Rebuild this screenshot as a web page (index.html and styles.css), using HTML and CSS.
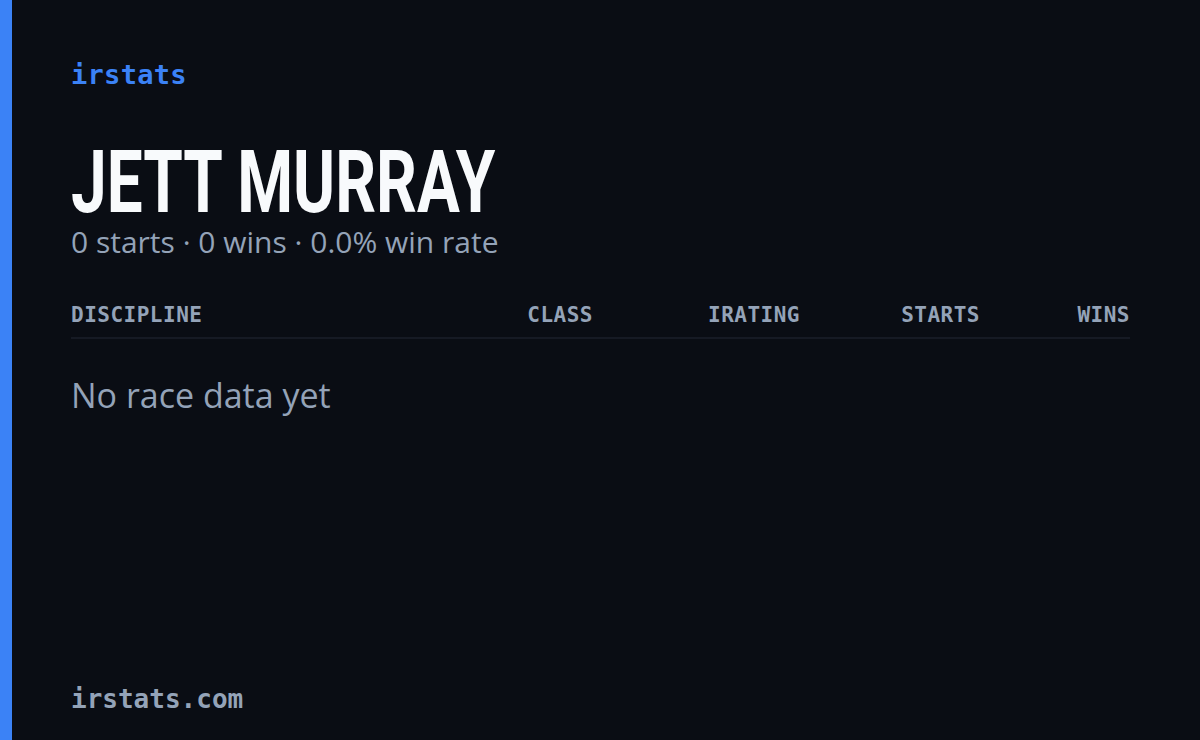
FILE: index.html
```html
<!DOCTYPE html>
<html>
<head>
<meta charset="utf-8">
<link rel="stylesheet" href="styles.css">
</head>
<body>
<div class="card">
  <div class="accent"></div>
  <main class="content">
    <div class="logo">irstats</div>
    <h1 class="name"><span class="name-inner">JETT MURRAY</span></h1>
    <p class="summary">0 starts · 0 wins · 0.0% win rate</p>
    <div class="table-head">
      <span class="col col-left">DISCIPLINE</span>
      <span class="col">CLASS</span>
      <span class="col">IRATING</span>
      <span class="col">STARTS</span>
      <span class="col">WINS</span>
    </div>
    <p class="empty">No race data yet</p>
    <div class="footer">irstats.com</div>
  </main>
</div>
</body>
</html>
```

FILE: styles.css
```css
html, body {
  margin: 0;
  padding: 0;
  background: #0a0d14;
}
.card {
  width: 1200px;
  height: 740px;
  display: flex;
  background: #0a0d14;
  overflow: hidden;
}
.accent {
  width: 12px;
  flex: none;
  background: #3b82f6;
}
.content {
  flex: 1;
  display: flex;
  flex-direction: column;
  padding: 0 70px 0 59px;
}
.logo {
  font-family: "DejaVu Sans Mono", "Liberation Mono", monospace;
  font-size: 27px;
  font-weight: 700;
  letter-spacing: 0.3px;
  color: #3b82f6;
  margin-top: 58px;
  line-height: 34px;
}
.name {
  margin: 48px 0 0 0;
  font-family: "Roboto", "DejaVu Sans", sans-serif;
  font-weight: 700;
  font-size: 88px;
  line-height: 84px;
  color: #f8fafc;
  white-space: nowrap;
}
.name-inner {
  display: inline-block;
  transform: scaleX(0.726);
  transform-origin: left center;
}
.summary {
  margin: 0;
  font-family: "Open Sans", "Lato", sans-serif;
  font-size: 30px;
  line-height: 36px;
  color: #94a3b8;
}
.table-head {
  margin-top: 42px;
  display: grid;
  grid-template-columns: 1fr 150px 207px 180px 150px;
  border-bottom: 2px solid #161a24;
  padding-bottom: 9px;
  font-family: "DejaVu Sans Mono", "Liberation Mono", monospace;
  font-weight: 700;
  font-size: 21px;
  letter-spacing: 0.5px;
  line-height: 26px;
  color: #94a3b8;
}
.col {
  text-align: right;
}
.col-left {
  text-align: left;
}
.empty {
  margin: 36px 0 0 0;
  font-family: "Open Sans", "Lato", sans-serif;
  font-size: 34px;
  line-height: 40px;
  color: #94a3b8;
}
.footer {
  margin-top: auto;
  margin-bottom: 24px;
  font-family: "DejaVu Sans Mono", "Liberation Mono", monospace;
  font-weight: 700;
  font-size: 26px;
  line-height: 34px;
  color: #94a3b8;
}
```
